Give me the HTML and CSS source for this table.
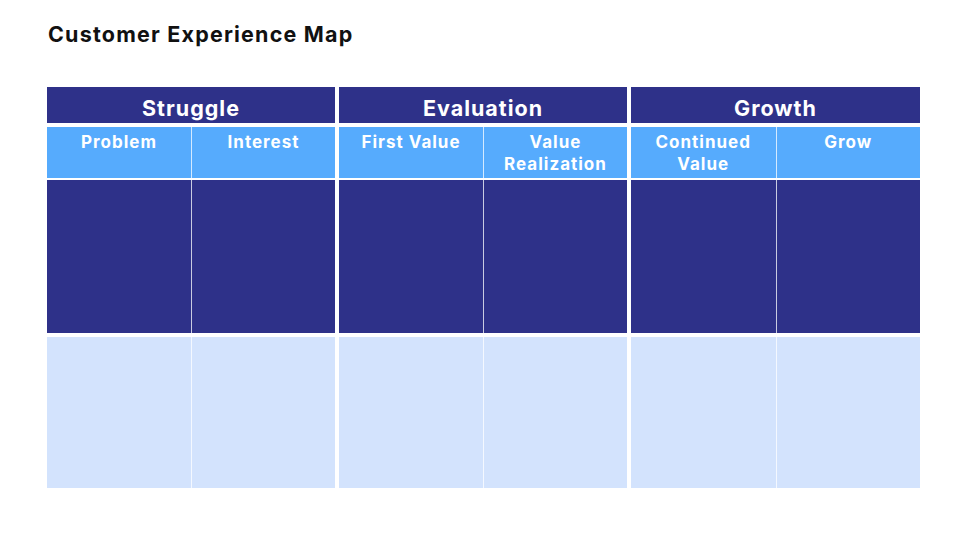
FILE: index.html
```html
<!DOCTYPE html>
<html>
<head>
<meta charset="utf-8">
<link rel="stylesheet" href="styles.css">
</head>
<body>
<div class="page">
  <h1 class="title">Customer Experience Map</h1>
  <div class="map">
    <div class="group">
      <div class="stage">Struggle</div>
      <div class="row sub">
        <div class="cell">Problem</div>
        <div class="cell">Interest</div>
      </div>
      <div class="row dark"><div class="cell"></div><div class="cell"></div></div>
      <div class="row light"><div class="cell"></div><div class="cell"></div></div>
    </div>
    <div class="group">
      <div class="stage">Evaluation</div>
      <div class="row sub">
        <div class="cell">First Value</div>
        <div class="cell">Value<br>Realization</div>
      </div>
      <div class="row dark"><div class="cell"></div><div class="cell"></div></div>
      <div class="row light"><div class="cell"></div><div class="cell"></div></div>
    </div>
    <div class="group">
      <div class="stage">Growth</div>
      <div class="row sub">
        <div class="cell">Continued<br>Value</div>
        <div class="cell">Grow</div>
      </div>
      <div class="row dark"><div class="cell"></div><div class="cell"></div></div>
      <div class="row light"><div class="cell"></div><div class="cell"></div></div>
    </div>
  </div>
</div>
</body>
</html>
```

FILE: styles.css
```css
html, body {
  margin: 0;
  padding: 0;
  background: #ffffff;
}
body {
  width: 960px;
  height: 540px;
  overflow: hidden;
  font-family: "Inter", "Noto Sans", sans-serif;
}
.page {
  padding: 20px 0 0 47px;
}
.title {
  margin: 0 0 0 1px;
  font-size: 21.5px;
  line-height: 28px;
  font-weight: 700;
  color: #111111;
  letter-spacing: 1.2px;
}
.map {
  margin-top: 39px;
  width: 873px;
  display: grid;
  grid-template-columns: 288px 288px 289px;
  column-gap: 4px;
}
.group {
  display: flex;
  flex-direction: column;
}
.stage {
  height: 36px;
  box-sizing: border-box;
  padding-top: 3px;
  background: #2e3189;
  color: #ffffff;
  font-size: 21.5px;
  font-weight: 700;
  line-height: 36px;
  text-align: center;
  letter-spacing: 1px;
}
.row {
  display: grid;
  grid-template-columns: 1fr 1fr;
}
.row .cell + .cell {
  border-left: 1.5px solid rgba(255, 255, 255, 0.75);
}
.sub {
  margin-top: 4px;
  height: 51px;
  background: #56abfd;
}
.sub .cell {
  color: #ffffff;
  font-size: 17px;
  font-weight: 700;
  line-height: 22px;
  text-align: center;
  padding-top: 4px;
  letter-spacing: 1px;
}
.dark {
  margin-top: 2px;
  height: 153px;
  background: #2e3189;
}
.light {
  margin-top: 4px;
  height: 151px;
  background: #d3e3fd;
}
```
